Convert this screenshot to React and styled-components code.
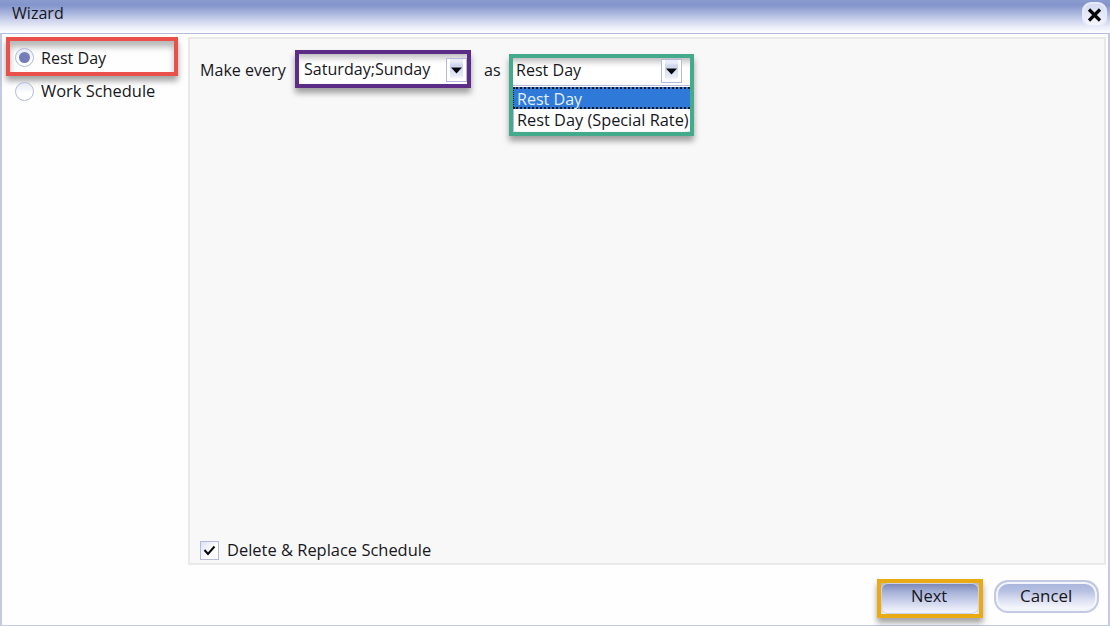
import React from "react";
import styled, { createGlobalStyle } from "styled-components";

const Global = createGlobalStyle`
  * { box-sizing: border-box; }
  body { margin: 0; overflow: hidden; background: #fff; }
`;

const Window = styled.div`
  width: 1110px;
  height: 626px;
  display: flex;
  flex-direction: column;
  background: #fefefe;
  color: #17171c;
  font: 17px/22px "Open Sans", "Noto Sans", sans-serif;
`;

const TitleBar = styled.header`
  height: 33px;
  display: flex;
  justify-content: space-between;
  align-items: flex-start;
  padding: 2px 3px 0 12px;
  background: linear-gradient(#8b9bce 0, #8294cb 5px, #a3b0da 12px, #cbd2ec 20px, #eef0fa 28px, #fff 33px);
`;

const Text = styled.span`
  display: inline-block;
  white-space: nowrap;
  flex: none;
  transform: scaleX(${(p) => p.$squeeze || 0.945});
  transform-origin: left center;
`;

const CloseButton = styled.button`
  width: 25px;
  height: 25px;
  padding: 0;
  border: 2px solid #e6eafa;
  border-radius: 9px;
  background: linear-gradient(#d5dbf2, #f4f6fd);
  display: grid;
  place-items: center;
`;

const Content = styled.div`
  flex: 1;
  min-height: 0;
  display: flex;
  flex-direction: column;
  border: solid #c3cae6;
  border-width: 1px 2px 1px 2px;
  border-top-color: #b5bcdf;
`;

const Body = styled.div`
  height: 531px;
  display: flex;
  padding: 3px 2px 0 4px;
`;

const Sidebar = styled.nav`
  width: 182px;
  display: flex;
  flex-direction: column;
`;

const Callout = styled.div`
  border: 4px solid ${(p) => p.$color};
  width: ${(p) => p.$w}px;
  height: ${(p) => p.$h}px;
  margin-top: ${(p) => p.$drop || 0}px;
  flex: none;
  box-shadow: 0 5px 6px rgba(0, 0, 0, 0.36), inset 0 6px 6px rgba(0, 0, 0, 0.28);
`;

const Option = styled.label`
  height: ${(p) => p.$h}px;
  display: flex;
  align-items: center;
  gap: 7px;
  padding-left: ${(p) => p.$indent}px;
`;

const Radio = styled.span`
  width: 19px;
  height: 19px;
  border: 1px solid #b3bad8;
  border-radius: 50%;
  display: grid;
  place-items: center;
  background: linear-gradient(#e4e7f4, #fff 60%);
  &::after {
    content: "";
    width: 11px;
    height: 11px;
    border-radius: 50%;
    background: ${(p) => (p.$on ? "#737dba" : "transparent")};
  }
`;

const Panel = styled.main`
  flex: 1;
  display: flex;
  flex-direction: column;
  justify-content: space-between;
  background: #f8f8f8;
  border: 2px solid #e9e9ea;
  padding: 11px 10px 2px;
`;

const Rule = styled.div`
  display: flex;
  align-items: flex-start;
`;

const Word = styled.div`
  width: ${(p) => p.$w}px;
  padding: 9px 0 0 ${(p) => p.$indent || 0}px;
`;

const Select = styled.div`
  height: ${(p) => p.$h}px;
  display: flex;
  justify-content: space-between;
  align-items: flex-start;
  padding: ${(p) => p.$pad};
  background: linear-gradient(rgba(0,0,0,.24), rgba(0,0,0,.04) 7px, transparent 10px), #fff;
`;

const Arrow = styled.span`
  width: 21px;
  height: 24px;
  border: 1px solid #b5badd;
  background: linear-gradient(90deg, #fff 3px, transparent 3px 16px, #fff 16px),
    linear-gradient(#e9ebf5 3px, #ccd4ed 6px, #e8ecf8 17px, #fff 20px);
  display: grid;
  place-items: center;
`;

const Menu = styled.div`
  border-top: 1px solid #b8bbd8;
  padding-top: 1px;
  background: #fff;
`;

const MenuItem = styled.div`
  height: 22px;
  padding-left: 3px;
  line-height: ${(p) => (p.$on ? 19 : 22)}px;
  white-space: nowrap;
  color: ${(p) => (p.$on ? "#e3f0ff" : "#17171c")};
  background: ${(p) => (p.$on ? "#2f79d8" : "#fff")};
  border: solid #b8bbd8;
  border-width: 0 0 0 1px;
  ${(p) => p.$on && "border: 1px dotted #111823; border-width: 2px 0 2px 1px;"}
`;

const CheckRow = styled.label`
  display: flex;
  align-items: center;
  gap: 8px;
`;

const CheckBox = styled.span`
  width: 19px;
  height: 19px;
  border: 1px solid #b3b9df;
  background: linear-gradient(135deg, #dfe3f4, #fff 60%);
  display: grid;
  place-items: center;
`;

const Footer = styled.footer`
  flex: 1;
  display: flex;
  justify-content: flex-end;
  align-items: flex-start;
  gap: 11px;
  padding: 14px 9px 0 0;
`;

const Button = styled.button`
  width: ${(p) => p.$w}px;
  height: ${(p) => p.$h}px;
  margin-top: ${(p) => (p.$framed ? 0 : 1)}px;
  padding: 0 1px ${(p) => (p.$framed ? 5 : 2)}px 0;
  display: grid;
  place-items: center;
  font: inherit;
  color: inherit;
  border: ${(p) => (p.$framed ? "1px solid #cbd2e8" : "2px solid #c3c9e2")};
  border-radius: ${(p) => (p.$framed ? 7 : 14)}px;
  background: ${(p) =>
    p.$framed
      ? "linear-gradient(#7d88b6, #a7b2d9 8px, #c9d0ea 17px, #f0f2fa 27px)"
      : "linear-gradient(#a7b3dc, #b6c0e2 9px, #d8ddf1 17px, #f8f9fd 27px)"};
  box-shadow: ${(p) => (p.$framed ? "none" : "inset 0 0 0 2px #f3f5fc")};
`;

const Triangle = () => (
  <svg width="11" height="7" viewBox="0 0 11 7"><path d="M0 .5h11L5.5 6.5z" fill="#080810" /></svg>
);

export default function App() {
  return (
    <>
      <Global />
      <Window>
        <TitleBar>
          <Text>Wizard</Text>
          <CloseButton aria-label="Close">
            <svg width="15" height="14" viewBox="0 0 15 14"><path d="M2 1.5l11 11M13 1.5L2 12.5" stroke="#050507" strokeWidth="3.2" /></svg>
          </CloseButton>
        </TitleBar>
        <Content>
          <Body>
            <Sidebar>
              <Callout $color="#e94f4b" $w={172} $h={39}>
                <Option $h={33} $indent={5}><Radio $on /><Text>Rest Day</Text></Option>
              </Callout>
              <Option $h={30} $indent={9}><Radio /><Text $squeeze={0.966}>Work Schedule</Text></Option>
            </Sidebar>
            <Panel>
              <Rule>
                <Word $w={95}><Text>Make every</Text></Word>
                <Callout $color="#5c2c87" $w={176} $h={38}>
                  <Select $h={30} $pad="4px 0 0 5px">
                    <Text>Saturday;Sunday</Text><Arrow><Triangle /></Arrow>
                  </Select>
                </Callout>
                <Word $w={38} $indent={13}><Text>as</Text></Word>
                <Callout $color="#43aa8b" $w={185} $h={82} $drop={4}>
                  <Select $h={27} $pad="1px 8px 0 3px">
                    <Text>Rest Day</Text><Arrow><Triangle /></Arrow>
                  </Select>
                  <Menu>
                    <MenuItem $on><Text>Rest Day</Text></MenuItem>
                    <MenuItem><Text $squeeze={0.96}>Rest Day (Special Rate)</Text></MenuItem>
                  </Menu>
                </Callout>
              </Rule>
              <CheckRow>
                <CheckBox>
                  <svg width="13" height="11" viewBox="0 0 13 11"><path d="M1.5 5l3.5 4 6.5-7.5" fill="none" stroke="#080810" strokeWidth="2" /></svg>
                </CheckBox>
                <Text $squeeze={0.968}>Delete &amp; Replace Schedule</Text>
              </CheckRow>
            </Panel>
          </Body>
          <Footer>
            <Callout $color="#e9aa13" $w={106} $h={39}>
              <Button $w={98} $h={31} $framed><Text $squeeze={0.97}>Next</Text></Button>
            </Callout>
            <Button $w={105} $h={33}><Text $squeeze={0.995}>Cancel</Text></Button>
          </Footer>
        </Content>
      </Window>
    </>
  );
}
